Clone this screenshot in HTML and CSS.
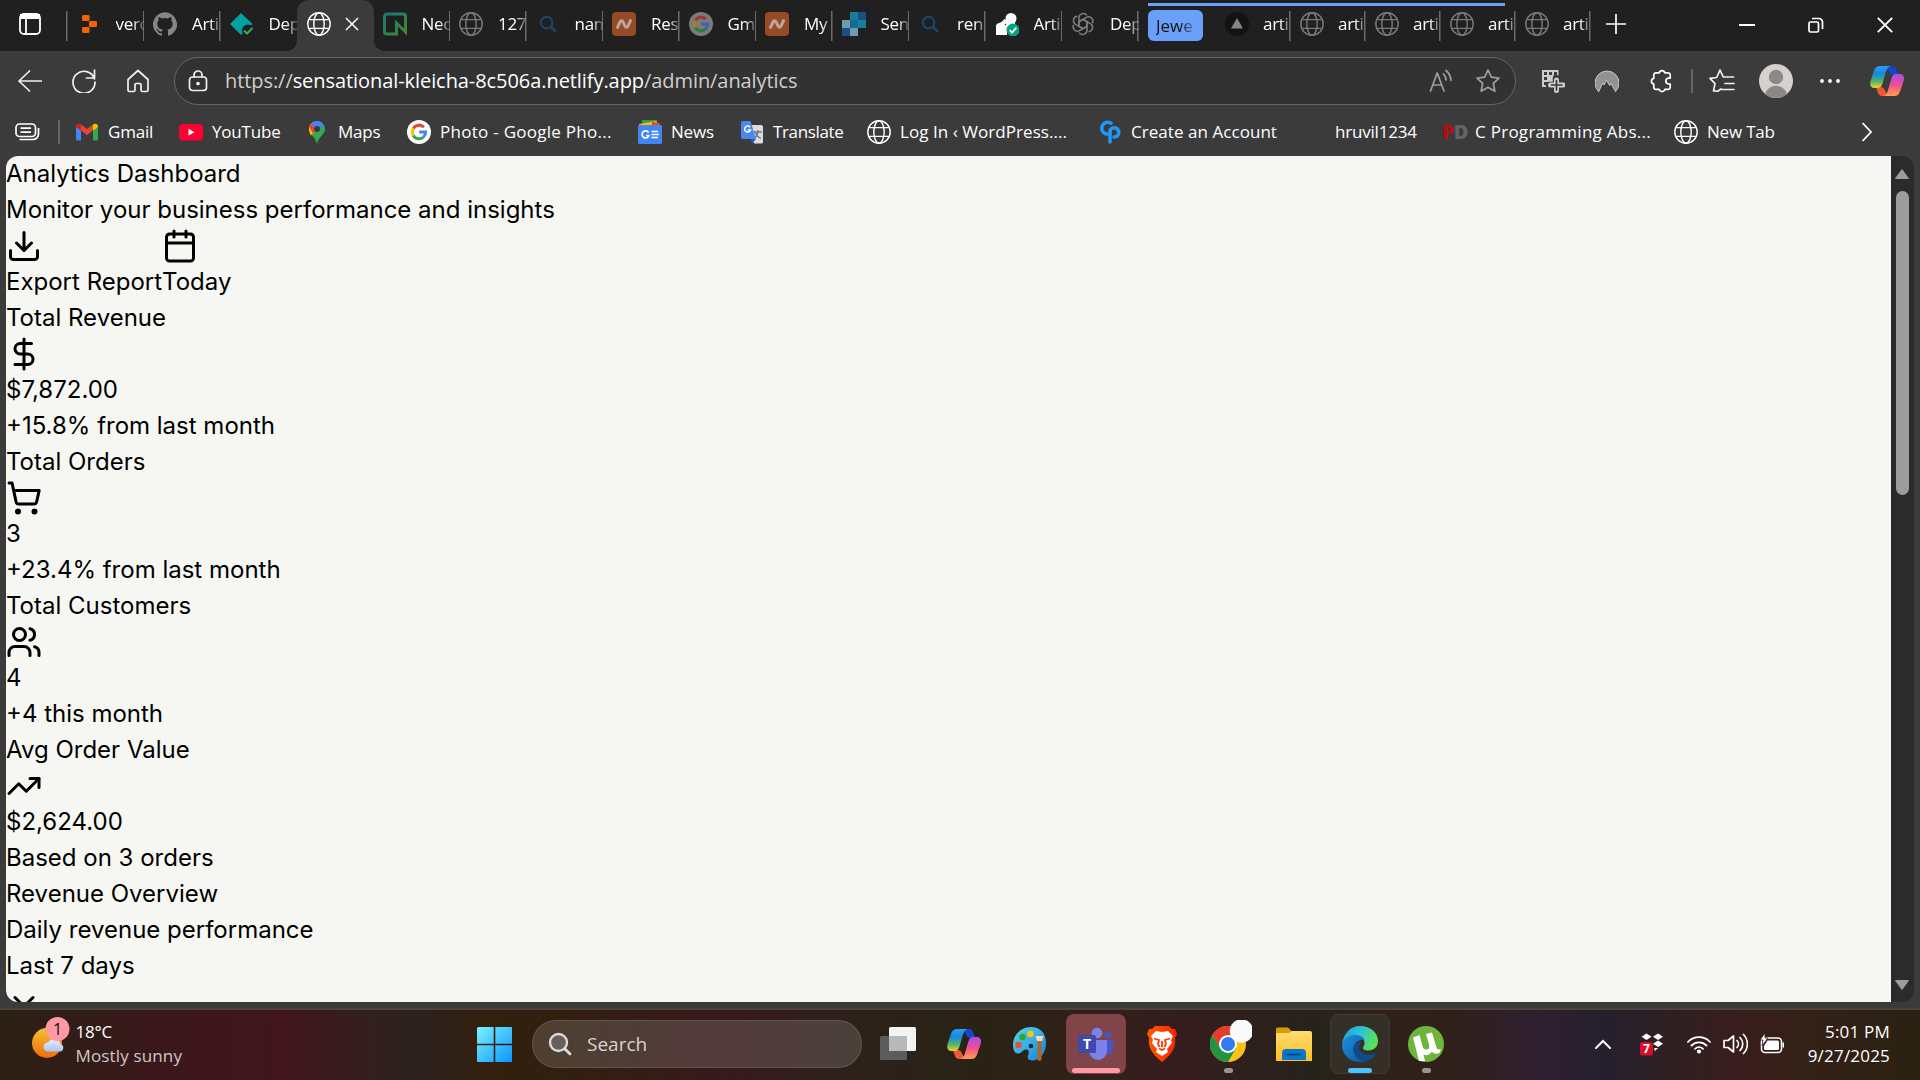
FILE: index.html
```html
<!DOCTYPE html>
<html lang="en">
<head>
<meta charset="utf-8">
<title>Analytics Dashboard</title>
<link rel="stylesheet" href="styles.css">
</head>
<body>
<svg class="defs" aria-hidden="true">
  <defs>
    <linearGradient id="cpA" x1="0" y1="0" x2="0" y2="1"><stop offset="0" stop-color="#2aa0f5"/><stop offset=".35" stop-color="#1488e0"/><stop offset=".7" stop-color="#4fb56a"/><stop offset="1" stop-color="#f6d31c"/></linearGradient>
    <linearGradient id="cpB" x1="0" y1="0" x2="0" y2="1"><stop offset="0" stop-color="#a64cf0"/><stop offset=".5" stop-color="#ee5090"/><stop offset="1" stop-color="#ffa04a"/></linearGradient>
    <linearGradient id="win" x1="0" y1="0" x2="1" y2="1"><stop offset="0" stop-color="#7bf3ff"/><stop offset="1" stop-color="#0a94ff"/></linearGradient>
    <linearGradient id="sun" x1="0" y1="0" x2="0" y2="1"><stop offset="0" stop-color="#f6c12c"/><stop offset="1" stop-color="#f06a12"/></linearGradient>
    <linearGradient id="cloud" x1="0" y1="0" x2="0" y2="1"><stop offset="0" stop-color="#e6f0ff"/><stop offset="1" stop-color="#a9c4f2"/></linearGradient>
    <linearGradient id="fold" x1="0" y1="0" x2="0" y2="1"><stop offset="0" stop-color="#ffdc6e"/><stop offset="1" stop-color="#fdc023"/></linearGradient>
    <linearGradient id="edgeTop" x1="0" y1="0" x2="1" y2=".3"><stop offset="0" stop-color="#1e9fe0"/><stop offset=".55" stop-color="#2fc3d6"/><stop offset="1" stop-color="#5be05a"/></linearGradient>
    <linearGradient id="edgeLow" x1="0" y1="0" x2="1" y2="1"><stop offset="0" stop-color="#1a8fe0"/><stop offset="1" stop-color="#0c59a4"/></linearGradient>
    <linearGradient id="paint" x1="0" y1="0" x2="1" y2="1"><stop offset="0" stop-color="#5ad6f8"/><stop offset="1" stop-color="#1184d6"/></linearGradient>
    <linearGradient id="brave" x1="0" y1="0" x2="1" y2="0"><stop offset="0" stop-color="#ff5a00"/><stop offset="1" stop-color="#ff2200"/></linearGradient>
    <linearGradient id="neon" x1="0" y1="0" x2="1" y2="1"><stop offset="0" stop-color="#187a78"/><stop offset="1" stop-color="#3d8a2c"/></linearGradient>
    <symbol id="globe" viewBox="0 0 24 24"><g fill="none" stroke="currentColor" stroke-width="1.4"><circle cx="12" cy="12" r="11.2"/><ellipse cx="12" cy="12" rx="5.2" ry="11.2"/><path d="M2.2 7.6h19.6M2.2 16.4h19.6"/></g></symbol>
    <symbol id="google" viewBox="0 0 24 24"><circle cx="12" cy="12" r="12" fill="var(--disc,#fff)"/><g fill="none" stroke-width="3"><path d="M6.3 8.6A6.6 6.6 0 0 1 16.9 7.2" stroke="var(--r,#ea4335)"/><path d="M6.3 15.4a6.6 6.6 0 0 1 0-6.8" stroke="var(--y,#fbbc05)"/><path d="M16.6 17A6.6 6.6 0 0 1 6.3 15.4" stroke="var(--g,#34a853)"/><path d="M12.2 12h6.4a6.6 6.6 0 0 1-2 5" stroke="var(--b,#4285f4)"/></g></symbol>
    <symbol id="lens" viewBox="0 0 24 24"><g fill="none" stroke="#1d4467" stroke-width="2.2"><circle cx="10.6" cy="10.6" r="5.8"/><path d="m14.8 14.8 5 5" stroke-width="2.8"/></g></symbol>
    <symbol id="wave" viewBox="0 0 24 24"><rect width="24" height="24" rx="4" fill="#964a25"/><path d="M5 16.500 8 10c.8-1.800 2.300-1.800 3 0l2 4c.8 1.800 2.300 1.800 3 0l3-6.500" fill="none" stroke="#bfa598" stroke-width="3" stroke-linecap="butt"/></symbol>
    <symbol id="copilot" viewBox="0 0 34 30"><path d="M20 0h2c2.600 0 3.700 1.700 4.600 4.500L28 9h-4.500c-2.500 0-3.500-1-4.500-3.500-.7-1.800-1.500-3-3.200-3.300z" fill="#1546d0"/><path d="M14 30h-2c-2.600 0-3.700-1.700-4.600-4.500L6 21h4.500c2.500 0 3.500 1 4.500 3.500.7 1.800 1.500 3 3.200 3.300z" fill="#f2553a"/><path id="rib" d="M10.500 0H21c-3 .6-4 2.500-5 5.500L12.500 17.500C11.600 20.500 10 22 7 22H4.800C.5 22-.5 19 .6 15L4 4.800C5 1.500 7 0 10.500 0z" fill="url(#cpA)"/><path d="M10.500 0H21c-3 .6-4 2.500-5 5.500L12.500 17.500C11.600 20.500 10 22 7 22H4.800C.5 22-.5 19 .6 15L4 4.800C5 1.500 7 0 10.500 0z" transform="rotate(180 17 15)" fill="#e9568f"/><path d="M23.500 30H13c3-.6 4-2.500 5-5.500l3.500-12C22.400 9.500 24 8 27 8h2.200c4.300 0 5.300 3 4.200 7L30 25.200c-1 3.300-3 4.800-6.500 4.800z" fill="url(#cpB)"/></symbol>
  </defs>
</svg>

<div class="browser">
  <header class="tabstrip">
    <div class="panel-btn"><svg width="22" height="22" viewBox="0 0 22 22" fill="none" stroke="#fff" stroke-width="1.800"><rect x="1" y="1" width="20" height="20" rx="4"/><path d="M1 3.500h20" stroke-width="5"/><path d="M7 5v16"/></svg></div>

    <div class="tab"><svg class="ico" viewBox="0 0 24 24" fill="#f26207"><rect x="5" y="3" width="7.500" height="6" rx="1.200"/><rect x="12" y="9" width="8" height="6" rx="1.200"/><rect x="5" y="15" width="7.500" height="6" rx="1.200"/></svg><span>verc</span></div>
    <div class="tab"><svg class="ico" viewBox="0 0 24 24"><path fill="#868686" d="M12 .3a12 12 0 0 0-3.800 23.400c.6.100.8-.3.800-.6v-2c-3.300.7-4-1.600-4-1.600-.6-1.400-1.400-1.800-1.400-1.800-1-.7.100-.7.100-.7 1.200 0 1.900 1.200 1.900 1.200 1 1.800 2.800 1.300 3.500 1 0-.8.400-1.300.7-1.600-2.700-.3-5.500-1.300-5.500-6 0-1.200.5-2.300 1.300-3.100-.2-.4-.6-1.600 0-3.200 0 0 1-.3 3.400 1.200a11.500 11.500 0 0 1 6 0c2.300-1.500 3.300-1.200 3.300-1.200.6 1.600.2 2.800 0 3.200.9.800 1.300 1.900 1.300 3.200 0 4.600-2.800 5.600-5.500 5.900.5.400.9 1 .9 2.200v3.300c0 .3.100.7.800.6A12 12 0 0 0 12 .3"/></svg><span>Arti</span></div>
    <div class="tab nosep"><svg class="ico" viewBox="0 0 24 24"><path d="M11 1 22.500 12 11 23 0 12z" fill="#00a3a3"/><circle cx="18" cy="18.500" r="6" fill="#202020"/><path d="m14 18.500 3 3 5.500-5.500" fill="none" stroke="#2fb15a" stroke-width="2"/></svg><span>Dep</span></div>
    <div class="tab active"><svg class="ico" color="#fff"><use href="#globe"/></svg><svg class="close" viewBox="0 0 14 14" stroke="#fff" stroke-width="1.500"><path d="m1 1 12 12M13 1 1 13"/></svg></div>
    <div class="tab"><svg class="ico" viewBox="0 0 24 24"><path fill="none" stroke="url(#neon)" stroke-width="3" d="M13.500 22H4a2.500 2.500 0 0 1-2.500-2.500v-15A2.500 2.500 0 0 1 4 2h16a2.500 2.500 0 0 1 2.500 2.500V20L13.500 11z"/></svg><span>Nec</span></div>
    <div class="tab"><svg class="ico" color="#7a7a7a"><use href="#globe"/></svg><span>127</span></div>
    <div class="tab"><svg class="ico"><use href="#lens"/></svg><span>nam</span></div>
    <div class="tab"><svg class="ico"><use href="#wave"/></svg><span>Res</span></div>
    <div class="tab"><svg class="ico dim"><use href="#google"/></svg><span>Gm</span></div>
    <div class="tab"><svg class="ico"><use href="#wave"/></svg><span>My</span></div>
    <div class="tab"><svg class="ico" viewBox="0 0 24 24"><path fill="#167f9c" d="M8 0h8v8H8z"/><path fill="#1d4f80" d="M16 0h8v8h-8z"/><path fill="#6e9cae" d="M0 8h8v8H0z"/><path fill="#1a6a90" d="M8 8h8v8H8z"/><path fill="#167f9c" d="M16 8h8v8h-8z"/><path fill="#1d4f80" d="M0 16h8v8H0z"/><path fill="#6e9cae" d="M8 16h8v8H8z"/></svg><span>Sen</span></div>
    <div class="tab"><svg class="ico"><use href="#lens"/></svg><span>ren</span></div>
    <div class="tab"><svg class="ico" viewBox="0 0 24 24"><path d="M2 14c4-1 7-2 9-6" stroke="#fff" stroke-width="4" fill="none"/><circle cx="16" cy="6.500" r="5.500" fill="#fff"/><path fill="#fff" d="M1 13h11v10H1zM11 8h9v8h-9z"/><circle cx="18" cy="18" r="6.500" fill="#00a67d"/><path d="m14.800 18.200 2.300 2.500 4.200-5" fill="none" stroke="#fff" stroke-width="1.800"/></svg><span>Arti</span></div>
    <div class="tab"><svg class="ico" viewBox="0 0 24 24" fill="none" stroke="#7c7c7c" stroke-width="1.500"><g id="petal"><path d="M12 7.400 8 9.700V5.800a4.300 4.300 0 0 1 7.900-2.400"/><path d="M12 7.400 17.200 10.400"/></g><use href="#petal" transform="rotate(60 12 12)"/><use href="#petal" transform="rotate(120 12 12)"/><use href="#petal" transform="rotate(180 12 12)"/><use href="#petal" transform="rotate(240 12 12)"/><use href="#petal" transform="rotate(300 12 12)"/></svg><span>Dep</span></div>

    <div class="group">
      <div class="chip"><span>Jewe</span></div>
      <div class="tab"><svg class="ico" viewBox="0 0 24 24"><circle cx="12" cy="12" r="12" fill="#131313"/><path d="m12 6 6 10.500H6z" fill="#858585"/></svg><span>arti</span></div>
      <div class="tab"><svg class="ico" color="#7a7a7a"><use href="#globe"/></svg><span>arti</span></div>
      <div class="tab"><svg class="ico" color="#7a7a7a"><use href="#globe"/></svg><span>arti</span></div>
      <div class="tab"><svg class="ico" color="#7a7a7a"><use href="#globe"/></svg><span>arti</span></div>
      <div class="tab"><svg class="ico" color="#7a7a7a"><use href="#globe"/></svg><span>arti</span></div>
    </div>
    <svg class="plus" viewBox="0 0 22 22" stroke="#fff" stroke-width="1.700"><path d="M11 1v20M1 11h20"/></svg>
    <div class="winctl">
      <svg width="16" height="16" viewBox="0 0 16 16" stroke="#fff" stroke-width="2"><path d="M0 8h16"/></svg>
      <svg width="16" height="16" viewBox="0 0 16 16" fill="none" stroke="#fff" stroke-width="1.700"><rect x="1" y="5" width="9.500" height="10" rx="1.500"/><path d="M4 1.500h7A3.500 3.500 0 0 1 14.500 5v7"/></svg>
      <svg width="16" height="16" viewBox="0 0 16 16" stroke="#fff" stroke-width="1.900"><path d="m.8.8 14.400 14.400M15.200.8.800 15.200"/></svg>
    </div>
  </header>

  <div class="toolbar">
    <div class="nav">
      <svg width="24" height="24" viewBox="0 0 24 24"><path d="M24 12H1M11.500 2 1 12l10.500 10"/></svg>
      <svg width="24" height="24" viewBox="0 0 24 24"><path d="M22.500 10A11 11 0 1 0 23 13M22.500 1v8h-8"/></svg>
      <svg width="24" height="24" viewBox="0 0 24 24"><path d="M2 10.500 12 1.500l10 9V21a1.500 1.500 0 0 1-1.500 1.500h-4A1.500 1.500 0 0 1 15 21v-5.500a1 1 0 0 0-1-1h-4a1 1 0 0 0-1 1V21a1.500 1.500 0 0 1-1.500 1.500h-4A1.500 1.500 0 0 1 2 21z"/></svg>
    </div>
    <div class="address">
      <svg class="lock" width="20" height="22" viewBox="0 0 20 22"><rect x="1.500" y="7" width="17" height="13.500" rx="3"/><path d="M6 7V5a4 4 0 0 1 8 0v2"/><circle cx="10" cy="13.500" r="1" fill="#d8d8d8"/></svg>
      <div class="url">https://<b>sensational-kleicha-8c506a.netlify.app</b>/admin/analytics</div>
      <svg class="read" width="24" height="24" viewBox="0 0 24 24"><path d="m1.500 22 6.700-18L15 22M4 16h8.500M14.500 5a9 9 0 0 1 2.500 6M17 1.500a14 14 0 0 1 5 10"/></svg>
      <svg class="star" width="26" height="26" viewBox="0 0 26 26"><path d="m13 2 3.300 7.200 7.700.9-5.700 5.300 1.600 7.800-6.900-3.900-6.900 3.900 1.600-7.800L2 10.100l7.700-.9z"/></svg>
    </div>
    <div class="exts">
      <svg width="24" height="24" viewBox="0 0 24 24" stroke-linecap="butt"><path d="M1 1h16.500v17H1z" fill="#cbcbd1" stroke="none"/><path d="M3 3h3v3H3zm5 0h3v3H8zm5 0h3v3h-3zM3 8h3v3H3zm0 5h3v3H3z" fill="#3b3b3b" stroke="none"/><g fill="none"><path d="M15 9v14M8 16h15" stroke="#3b3b3b" stroke-width="6.500"/><path d="M15.500 11v10.500M9.500 16h12.500" stroke="#cfcfd4" stroke-width="5"/><path d="M15.500 11.500v9.500M10.500 16h10.500" stroke="#3b3b3b" stroke-width="1.700"/></g></svg>
      <svg width="24" height="24" viewBox="0 0 24 24"><path d="M3.500 22.500a12 12 0 1 1 17 0L16 14.500l-1.500 2-3-5.500-2.500 5-1.300-1.500z" fill="#929292" stroke="#c8c8c8" stroke-width="1"/></svg>
      <svg width="24" height="24" viewBox="0 0 24 24"><path d="M10.200 3.800a2.900 2.900 0 0 1 5.600 0H19a2.200 2.200 0 0 1 2.200 2.200v3.200h-1.400a2.900 2.900 0 0 0 0 5.800h1.400v3.200A2.200 2.200 0 0 1 19 20.400h-3.200a2.900 2.900 0 0 1-5.600 0H7a2.200 2.200 0 0 1-2.200-2.200V15a2.900 2.900 0 0 1 0-5.700V6A2.200 2.200 0 0 1 7 3.800z" stroke="#fff" stroke-width="1.700"/></svg>
      <i class="vr"></i>
      <svg width="26" height="24" viewBox="0 0 26 24" stroke="#fff"><path d="M9 22.200 4.500 22 6 14.600 1 9.300l6.700-.8L11 1l3.300 7h10.200M16 14.500h9M13 20.500h12M9 22l3-2"/></svg>
      <svg class="avatar" width="34" height="34" viewBox="0 0 34 34"><circle cx="17" cy="17" r="17" fill="#d4d1ce"/><circle cx="17" cy="13" r="7.200" fill="#8b8885"/><path d="M6 30a11.500 11.500 0 0 1 22 0 17 17 0 0 1-22 0z" fill="#8b8885"/></svg>
      <svg width="20" height="4" viewBox="0 0 20 4"><g fill="#fff" stroke="none"><circle cx="2" cy="2" r="1.900"/><circle cx="10" cy="2" r="1.900"/><circle cx="18" cy="2" r="1.900"/></g></svg>
      <svg class="cop" width="34" height="30"><use href="#copilot"/></svg>
    </div>
  </div>

  <nav class="bookmarks">
    <svg class="tabs-icon" width="25" height="18" viewBox="0 0 25 18" fill="none" stroke="#fff" stroke-width="1.700"><rect x="1" y="1" width="19.500" height="12.500" rx="3.500"/><path d="M5.500 5.200h10.500M5.500 9.200h10.500M4.500 16.500h13.500a5.500 5.500 0 0 0 5.500-5.500V5"/></svg>
    <i class="vr"></i>
    <div class="bm"><svg class="ico" viewBox="0 0 24 24"><path d="M1 6v13a1.500 1.500 0 0 0 1.500 1.500H6V9z" fill="#4285f4"/><path d="M23 6v13a1.500 1.500 0 0 1-1.500 1.500H18V9z" fill="#34a853"/><path d="M1 6.500C1 3.500 4 3 6 4.500l6 4.500 6-4.500v6L12 15 6 10.500z" fill="#ea4335"/><path d="M1 6.500C1 3.500 4 3 6 4.500v6L1 7z" fill="#c5221f"/><path d="M23 6.500c0-3-3-3.500-5-2v6L23 7z" fill="#fbbc04"/></svg><span>Gmail</span></div>
    <div class="bm"><svg class="ico" viewBox="0 0 24 24"><rect y="4" width="24" height="16.500" rx="4" fill="#ff0033"/><path d="m9.500 8.800 6 3.400-6 3.400z" fill="#fff"/></svg><span>YouTube</span></div>
    <div class="bm"><svg class="ico" viewBox="0 0 24 24"><path d="M4 9a8 8 0 0 1 16 0c0 5.500-6 7-8 15-2-8-8-9.500-8-15z" fill="#34a853"/><path d="M6 3.700 12 9l-6 6.500C4.500 13 4 11 4 9s.8-4 2-5.300z" fill="#fbbc04"/><path d="M6 3.700 12 9l-4 4.500L4.200 7A8 8 0 0 1 6 3.700z" fill="#ea4335"/><path d="M6 3.700A8 8 0 0 1 18.800 5L12 12 9 7z" fill="#4285f4"/><circle cx="12" cy="9" r="3" fill="#3b3b3b"/></svg><span>Maps</span></div>
    <div class="bm"><svg class="ico"><use href="#google"/></svg><span class="loose">Photo - Google Pho...</span></div>
    <div class="bm"><svg class="ico" viewBox="0 0 24 24"><path d="M4 0h15v5H4z" fill="#2e9e4b"/><path d="m1 4 17-3 4 6H2z" fill="#fbbc04"/><path d="m14 2 8 1-1 5h-7z" fill="#ea4335"/><rect y="5" width="24" height="19" rx="1.500" fill="#4285f4"/><path d="M10.500 12.500a3.500 3.500 0 1 0 .4 3H8M13.500 11.500H20M13.500 14.500h7.500M13.500 17.500H20" fill="none" stroke="#fff" stroke-width="1.700"/></svg><span>News</span></div>
    <div class="bm"><svg class="ico" viewBox="0 0 24 24"><path d="M10 5h11a2 2 0 0 1 2 2v15a1.500 1.500 0 0 1-1.500 1.500H14z" fill="#dcdcdc"/><path d="M14 12h8M18 10v2c-.5 3-2 5-4 6M15.500 13c1 2.500 3 4.500 5.500 5.500" fill="none" stroke="#6b7680" stroke-width="1.300"/><path d="M2.500 1h8L16 19H3a2 2 0 0 1-2-2V2.500A1.500 1.500 0 0 1 2.500 1z" fill="#4d86ec"/><path d="M10.500 19H16l-4 4.500z" fill="#2a56c6"/><path d="M10 7.200A3 3 0 1 0 10.500 10H7.800" fill="none" stroke="#fff" stroke-width="1.500"/></svg><span class="tight">Translate</span></div>
    <div class="bm"><svg class="ico" color="#fff"><use href="#globe"/></svg><span class="even">Log In ‹ WordPress....</span></div>
    <div class="bm"><svg class="ico" viewBox="0 0 24 24" fill="none" stroke="#2196f3" stroke-width="3.600" stroke-linecap="round"><path d="M13 3.200A6 6 0 1 0 8 14h4"/><path d="M12 22V10.500a4.600 4.600 0 1 1 4 6.500"/></svg><span class="even">Create an Account</span></div>
    <div class="bm"><i class="ico"></i><span>hruvil1234</span></div>
    <div class="bm"><span class="pd ico"><em>P</em><em>D</em></span><span class="loose">C Programming Abs...</span></div>
    <div class="bm"><svg class="ico" color="#fff"><use href="#globe"/></svg><span>New Tab</span></div>
    <svg class="more" width="12" height="20" viewBox="0 0 12 20" fill="none" stroke="#fff" stroke-width="1.800"><path d="m1.500 1 8.500 9-8.500 9"/></svg>
  </nav>

  <div class="viewport">
    <main class="page">
      <p>Analytics Dashboard</p>
      <p>Monitor your business performance and insights</p>
      <div class="actions">
        <div><svg class="lu" viewBox="0 0 24 24"><path d="M21 15v4a2 2 0 0 1-2 2H5a2 2 0 0 1-2-2v-4M7 10l5 5 5-5M12 15V3"/></svg>Export Report</div>
        <div><svg class="lu" viewBox="0 0 24 24"><path d="M8 2v4M16 2v4M3 10h18"/><rect x="3" y="4" width="18" height="18" rx="2"/></svg>Today</div>
      </div>
      <p>Total Revenue</p>
      <svg class="lu" viewBox="0 0 24 24"><path d="M12 2v20M17 5H9.500a3.500 3.500 0 0 0 0 7h5a3.500 3.500 0 0 1 0 7H6"/></svg>
      <p>$7,872.00</p>
      <p>+15.8% from last month</p>
      <p>Total Orders</p>
      <svg class="lu" viewBox="0 0 24 24"><circle cx="8" cy="21" r="1"/><circle cx="19" cy="21" r="1"/><path d="M2.050 2.050h2l2.660 12.420a2 2 0 0 0 2 1.580h9.780a2 2 0 0 0 1.950-1.570l1.650-7.430H5.120"/></svg>
      <p>3</p>
      <p>+23.4% from last month</p>
      <p>Total Customers</p>
      <svg class="lu" viewBox="0 0 24 24"><path d="M16 21v-2a4 4 0 0 0-4-4H6a4 4 0 0 0-4 4v2"/><circle cx="9" cy="7" r="4"/><path d="M22 21v-2a4 4 0 0 0-3-3.870M16 3.130a4 4 0 0 1 0 7.750"/></svg>
      <p>4</p>
      <p>+4 this month</p>
      <p>Avg Order Value</p>
      <svg class="lu" viewBox="0 0 24 24"><path d="m22 7-8.500 8.500-5-5L2 17"/><path d="M16 7h6v6"/></svg>
      <p>$2,624.00</p>
      <p>Based on 3 orders</p>
      <p>Revenue Overview</p>
      <p>Daily revenue performance</p>
      <p>Last 7 days</p>
      <svg class="lu" viewBox="0 0 24 24"><path d="m6 9 6 6 6-6"/></svg>
    </main>
    <div class="scroll">
      <svg width="16" height="12" viewBox="0 0 16 12"><path d="M8 1.500 14.500 10.500h-13z"/></svg>
      <div class="thumb"></div>
      <svg width="16" height="12" viewBox="0 0 16 12"><path d="M8 10.500 14.500 1.500h-13z"/></svg>
    </div>
  </div>
</div>

<footer class="taskbar">
  <div class="weather">
    <svg width="44" height="44" viewBox="0 0 44 44"><circle cx="17" cy="26" r="15" fill="url(#sun)"/><path d="M18 34.500a4.500 4.500 0 0 1 0-9 7 7 0 0 1 12.500 1.500 4 4 0 0 1 .5 7.500z" fill="url(#cloud)"/><circle cx="27.500" cy="12" r="12" fill="#ff99a4"/><text x="27.500" y="18" text-anchor="middle" font-size="16" fill="#111">1</text></svg>
    <div class="wtext"><b>18°C</b><span>Mostly sunny</span></div>
  </div>
  <svg class="start" width="35" height="35" viewBox="0 0 35 35" fill="url(#win)"><path d="M1.500 0h33A.5.500 0 0 1 35 .5v34a.5.500 0 0 1-.5.500H.5a.5.500 0 0 1-.5-.5V1.500A1.500 1.500 0 0 1 1.500 0z"/><path d="M17.500 0v35M0 17.500h35" stroke="#31200f" stroke-width="1.600"/></svg>
  <div class="search"><svg width="24" height="24" viewBox="0 0 24 24" fill="none" stroke="#dcdcdc" stroke-width="2.400" stroke-linecap="round"><circle cx="10.500" cy="10.500" r="8.500" fill="#6a5e5a"/><path d="m17 17 5 5" stroke-width="2.800"/></svg><span>Search</span></div>
  <div class="apps">
    <div class="app"><svg width="36" height="36" viewBox="0 0 36 36"><rect y="10" width="27" height="24" rx="1.500" fill="#5c5c5c"/><rect x="9" y="1" width="27" height="24" rx="1.500" fill="#f3f3f3"/><path d="M9 10h18v15H9z" fill="#b9b9b9"/></svg></div>
    <div class="app"><svg width="34" height="30"><use href="#copilot"/></svg></div>
    <div class="app"><svg width="36" height="36" viewBox="0 0 36 36"><path d="M19 1C9 1 1 9 1 18.500c0 6.500 2.500 9.500 6 9 3-.5 4-4.500 7.500-4 3 .5 2.500 3.500 1.500 6s.5 5 4 5C28 34.500 34 27 34 17S28 1 19 1z" fill="url(#paint)"/><circle cx="6.500" cy="19" r="3.300" fill="#e5532d"/><circle cx="10.500" cy="11" r="3.300" fill="#2fa52c"/><circle cx="18.500" cy="8" r="3.300" fill="#ffc20e"/><circle cx="19" cy="20" r="2.300" fill="#26221c"/><path d="M25.500 15h4v18a2 2 0 0 1-4 0z" fill="#b5651d"/><path d="M23.500 10h8l-1.500 5h-5z" fill="#f2dcb5"/></svg></div>
    <div class="app alert"><svg width="36" height="36" viewBox="0 0 36 36"><circle cx="30" cy="9" r="3.500" fill="#4b53bc"/><path d="M25 14h9.500a1 1 0 0 1 1 1v8a6 6 0 0 1-10 4z" fill="#4b53bc"/><circle cx="19" cy="7" r="5.300" fill="#7b83eb"/><path d="M10 14h18a1 1 0 0 1 1 1v10a9 9 0 0 1-18 0z" fill="#7b83eb"/><rect x="0" y="9" width="18" height="18" rx="1.500" fill="#4249ae"/><text x="9" y="23" text-anchor="middle" font-size="14" font-weight="700" fill="#fff">T</text></svg><i class="run wide"></i></div>
    <div class="app"><svg width="30" height="36" viewBox="0 0 30 36"><path d="M8 0h14l3 3h3l2 5-2 4c1 9-2 15-13 24C4 27 1 21 2 12L0 8l2-5h3z" fill="url(#brave)"/><path d="M15 6 21 5l5 5-2 4 1 3-5 6 1 3-6 4-6-4 1-3-5-6 1-3-2-4 5-5z" fill="#fff"/><path d="M7 12.500l5 1.500-1 4 1.500 3M23 12.500 18 14l1 4-1.500 3M12 22.500l3 1.500 3-1.500M15 15v6" fill="none" stroke="#ff3a00" stroke-width="1.800"/></svg></div>
    <div class="app"><svg class="chrome" width="42" height="42" viewBox="0 0 42 42"><circle cx="18" cy="24" r="18" fill="#fbc116"/><path d="M2.400 15A18 18 0 0 1 33.600 15H18l-7.800 13.500z" fill="#e33b2e"/><path d="M2.400 15A18 18 0 0 0 18 42l7.800-13.500L18 24l-7.800 4.500z" fill="#229342"/><circle cx="18" cy="24" r="9" fill="#fff"/><circle cx="18" cy="24" r="7" fill="#2f7bf0"/><circle cx="31.500" cy="11" r="11.700" fill="#fafafa"/></svg><i class="run"></i></div>
    <div class="app"><svg width="36" height="34" viewBox="0 0 36 34"><path d="M0 2a1.500 1.500 0 0 1 1.500-1.500H12l4 4V12H0z" fill="#d99a07"/><path d="M0 6h13l3-2h18a2 2 0 0 1 2 2v28H0z" fill="url(#fold)"/><path d="M6 33V26a4 4 0 0 1 4-4h16a4 4 0 0 1 4 4v7z" fill="#0a76c8"/><path d="M11 27.500h14" stroke="#064a8c" stroke-width="1.800" stroke-linecap="round"/></svg></div>
    <div class="app current"><svg width="36" height="36" viewBox="0 0 36 36"><path d="M0 19C1 8 8 0 18 0c11 0 18 7 18 15 0 6-4.500 9.500-9.500 9.500-4 0-5.500-1.500-5.500-2.500 0-1.500 1.500-2 1.500-5 0-4-4-7-9-7C6 10 1 14 0 19z" fill="url(#edgeTop)"/><path d="M0 19c1-6 6.500-10 13-10 6 0 9 3 9.500 5-6-1-11 3-11 9 0 7 6 12 12 12.500C10 38 0 30 0 19z" fill="url(#edgeLow)"/><path d="M12 20c-2 8 4 15.500 11.500 15.500 4.500-1 8.500-4 10-7.500.3-1-.5-1-1-.8-6 3-14 1-15.500-5C16.500 20 18 17 20 16c-3-1-7 0-8 4z" fill="#114a8b"/></svg><i class="run mid"></i></div>
    <div class="app"><svg width="36" height="36" viewBox="0 0 36 36"><circle cx="18" cy="18" r="18" fill="#6fb43d"/><path d="M5 11.500 11.500 9l3 11c.8 3 2.500 4 4.500 3.500s2.800-2 2-5L18 8l6-1.500 4.500 15c.5 2 2 2.500 4.500 1.500l-1.500 4c-4 1.500-6.500.5-7.500-1.500-2 3.500-5.500 4.500-8.500 3L17 35l-6 0z" fill="#fff"/></svg><i class="run"></i></div>
  </div>
  <div class="tray">
    <svg width="16" height="10" viewBox="0 0 16 10" fill="none" stroke="#fff" stroke-width="2" stroke-linecap="round"><path d="m1 9 7-7 7 7"/></svg>
    <svg width="24" height="24" viewBox="0 0 24 24"><path fill="#fff" d="m6.500 1.500 5 3.200-5 3.200-5-3.200zM18 1.500l5 3.200-5 3.200-5-3.200zM18 8.500l5 3.200-5 3.200-5-3.200zM14 16h4l-3 3z"/><rect y="10" width="13" height="13.500" rx="2.500" fill="#d90b28"/><text x="6.500" y="21" text-anchor="middle" font-size="12" font-weight="700" fill="#fff">7</text></svg>
    <svg width="24" height="20" viewBox="0 0 24 20" fill="none" stroke="#fff" stroke-width="1.800" stroke-linecap="round"><path d="M1 8a15 15 0 0 1 22 0M4.500 11.500a10.500 10.500 0 0 1 15 0M8 14.800a5.700 5.700 0 0 1 8 0"/><circle cx="12" cy="17.500" r="1.200" fill="#fff"/></svg>
    <svg width="25" height="22" viewBox="0 0 25 22" fill="none" stroke="#fff" stroke-width="1.700" stroke-linecap="round" stroke-linejoin="round"><path d="M1 7.500h4L10.500 3v16L5 14.500H1zM14 7.500a5 5 0 0 1 0 7M17 4.500a9 9 0 0 1 0 13M20.500 1.500a13.500 13.500 0 0 1 0 19"/></svg>
    <svg width="25" height="22" viewBox="0 0 25 22"><rect x="1.500" y="5" width="20" height="14.500" rx="3.500" fill="none" stroke="#fff" stroke-width="1.600"/><path d="M7.500 7.500h10a1.500 1.500 0 0 1 1.500 1.500v6.500a1.500 1.500 0 0 1-1.500 1.500h-12A1.500 1.500 0 0 1 4 15.500V13zM22.500 9.500h1.500v5h-1.500z" fill="#fff"/><path d="M5 0 0 7h3l-1 6 6-8H5z" fill="#fff" stroke="#35201e" stroke-width=".8"/></svg>
    <div class="clock"><span>5:01 PM</span><span>9/27/2025</span></div>
  </div>
</footer>
</body>
</html>
```
FILE: styles.css
```css
* { box-sizing: border-box; }
body {
  margin: 0;
  width: 1920px;
  height: 1080px;
  overflow: hidden;
  background: #3b3b3b;
  color: #fff;
  font-family: "Open Sans", "Noto Sans", sans-serif;
  font-size: 17px;
  display: flex;
  flex-direction: column;
}
svg { display: block; flex: none; }
.defs { position: absolute; width: 0; height: 0; }
.ico { width: 24px; height: 24px; flex: none; }

.browser { height: 1008px; display: flex; flex-direction: column; }

/* tab strip */
.tabstrip { height: 51px; background: #202020; display: flex; }
.panel-btn { width: 67.5px; padding: 13px 0 0 19px; flex: none; }
.tab {
  width: 76.5px;
  height: 51px;
  flex: none;
  display: flex;
  align-items: center;
  gap: 15px;
  padding: 0 0 3px 9px;
  background: linear-gradient(#6a6a6a, #6a6a6a) right 11px / 1.5px 30px no-repeat;
}
.panel-btn { background: linear-gradient(#6a6a6a, #6a6a6a) right 11px / 1.5px 30px no-repeat; }
.tab span, .chip span {
  flex: 1;
  overflow: hidden;
  white-space: nowrap;
  letter-spacing: -.3px;
  line-height: 26px;
  -webkit-mask-image: linear-gradient(90deg, #000 60%, transparent 110%);
  mask-image: linear-gradient(90deg, #000 60%, transparent 110%);
}
.tab.nosep { background: none; }
.tab.active { background: #3b3b3b; border-radius: 12px 12px 0 0; gap: 14px; padding-left: 10px; position: relative; }
.tab.active::before, .tab.active::after {
  content: "";
  position: absolute;
  bottom: 0;
  width: 10px;
  height: 10px;
}
.tab.active::before { left: -10px; background: radial-gradient(circle at 0 0, transparent 9.5px, #3b3b3b 10px); }
.tab.active::after { right: -10px; background: radial-gradient(circle at 100% 0, transparent 9.5px, #3b3b3b 10px); }
.tab .close { width: 14px; height: 14px; }
.dim { --disc: #7b7b7b; --r: #9c3a32; --y: #a3801c; --g: #2d7a42; --b: #3a64a8; }
.group {
  display: flex;
  flex: none;
  width: 357px;
  margin-left: 9.5px;
  background: linear-gradient(#69a1fa, #69a1fa) 0 3px / 100% 3px no-repeat;
}
.group .tab { width: 75px; gap: 14.5px; }
.chip {
  width: 55px;
  height: 31px;
  flex: none;
  margin: 10px 12.5px 0 0;
  padding: 3px 8px;
  border-radius: 6px;
  background: #69a1fa;
  color: #111;
  display: flex;
}
.chip span { letter-spacing: 0; }
.plus { width: 22px; height: 22px; margin: 13px 0 0 100px; }
.winctl { display: flex; flex: 1; justify-content: flex-end; gap: 53px; padding: 17px 27px 0 0; }

/* toolbar */
.toolbar { height: 54px; display: flex; align-items: center; padding-top: 6px; }
.toolbar svg { fill: none; stroke: #f0f0f0; stroke-width: 1.7; stroke-linejoin: round; stroke-linecap: round; }
.nav { width: 174px; display: flex; gap: 30px; padding-left: 18px; }
.address {
  width: 1342px;
  height: 48px;
  border: 1.5px solid #666;
  border-radius: 24px;
  background: #323232;
  display: flex;
  align-items: center;
  padding: 0 14px 0 13px;
}
.url { flex: 1; margin-left: 17px; font-size: 20px; line-height: 28px; color: #cfcfcf; white-space: nowrap; letter-spacing: -.07px; }
.url b { font-weight: 400; color: #fff; }
.toolbar .read, .toolbar .star { stroke: #a0a0a0; }
.read { margin-right: 22px; }
.exts { display: flex; flex: 1; align-items: center; padding-left: 25px; }
.exts > :nth-child(2) { margin-left: 30px; }
.exts > :nth-child(3) { margin-left: 30px; }
.exts .vr { margin-left: 18px; }
.exts > :nth-child(5) { margin-left: 16px; }
.exts .avatar { margin-left: 24px; stroke: none; }
.exts > :nth-child(7) { margin-left: 27px; }
.exts .cop { margin-left: 30px; stroke: none; }
.vr { width: 1.5px; height: 24px; background: #666; flex: none; }

/* bookmarks */
.bookmarks {
  height: 51px;
  display: grid;
  grid-template-columns: 43px 17px 104px 126px 102px 231px 102px 127px 231px 204px 140px 232px 187px 12px;
  align-items: center;
  padding: 3px 0 0 15px;
}
.bm { display: flex; align-items: center; gap: 9px; white-space: nowrap; letter-spacing: -.2px; line-height: 26px; }
.loose { letter-spacing: .27px; }
.even { letter-spacing: .05px; }
.tight { letter-spacing: -.35px; }
.pd { font-weight: 800; font-size: 20px; letter-spacing: -1px; display: flex; align-items: center; }
.pd em { font-style: normal; color: #b01014; }
.pd em + em { color: #646464; }

/* page */
.viewport { height: 846px; margin: 0 6px; display: flex; border-radius: 12px; overflow: hidden; background: #2b2b2b; }
.page {
  flex: 1;
  background: #f6f7f2;
  color: #000;
  font: 24px/36px Inter, sans-serif;
  overflow: hidden;
}
.page p { margin: 0; }
.actions { display: flex; }
.lu { width: 36px; height: 36px; fill: none; stroke: #000; stroke-width: 2; stroke-linecap: round; stroke-linejoin: round; }
.scroll { width: 23px; display: flex; flex-direction: column; align-items: center; padding: 12px 1px 11px 0; }
.scroll svg { fill: #9d9d9d; stroke: #9d9d9d; stroke-linejoin: round; }
.thumb { width: 13px; height: 304px; margin: 11px 0 auto; border-radius: 7px; background: #9d9d9d; }

/* taskbar */
.taskbar {
  height: 72px;
  border-top: 2px solid #4d433e;
  display: flex;
  align-items: center;
  background: linear-gradient(90deg, #2c2013 0, #331c18 90px, #3b171b 160px, #41161c 290px, #331f20 370px, #2c2220 415px, #33200f 480px, #31200f 540px, #371a1d 730px, #30201b 830px, #2a2219 900px, #2a2314 990px, #32201a 1090px, #351d1f 1190px, #26231b 1310px, #30211a 1400px, #30201a 1450px, #2f1f30 1540px, #25202e 1605px, #2d2023 1660px, #391d1e 1730px, #352018 1790px, #2a2212 1920px);
}
.weather { width: 477px; display: flex; align-items: center; gap: 1.5px; padding: 0 0 0 30px; }
.weather svg { margin-bottom: 12px; }
.wtext { display: flex; flex-direction: column; line-height: 24px; letter-spacing: .15px; padding-bottom: 3px; }
.wtext b { font-weight: 400; letter-spacing: -.2px; }
.wtext span { color: #cfc8c6; }
.start { margin: 0 20px 2px 0; }
.search {
  width: 330px;
  height: 48px;
  display: flex;
  align-items: center;
  gap: 15px;
  padding-left: 15px;
  margin-top: -3px;
  border: 1.5px solid rgba(255, 255, 255, .13);
  border-radius: 24px;
  background: rgba(255, 255, 255, .14);
  color: #d8d3d1;
  font-size: 19px;
}
.apps { display: flex; gap: 6px; margin-left: 6px; }
.app { width: 60px; height: 60px; margin-top: -2px; border-radius: 8px; display: grid; place-items: center; position: relative; }
.app.alert { background: #804449; }
.app.current { background: #342f27; border: 1.5px solid #403a31; }
.chrome { margin: -6px -6px 0 0; }
.run { position: absolute; bottom: 1px; left: 50%; width: 9px; height: 5px; margin-left: -4px; border-radius: 3px; background: #9b9592; }
.run.wide { width: 48px; margin-left: -24px; background: #ff99a4; }
.run.mid { width: 24px; margin-left: -12px; background: #4cc2ff; bottom: 0; }
.tray { flex: 1; display: flex; align-items: center; justify-content: flex-end; padding: 0 30px 2px 0; gap: 12px; }
.tray > :nth-child(1) { margin-right: 17px; }
.tray > :nth-child(2) { margin-right: 11px; }
.clock { width: 93px; display: flex; flex-direction: column; align-items: flex-end; line-height: 24px; letter-spacing: .2px; }
```
